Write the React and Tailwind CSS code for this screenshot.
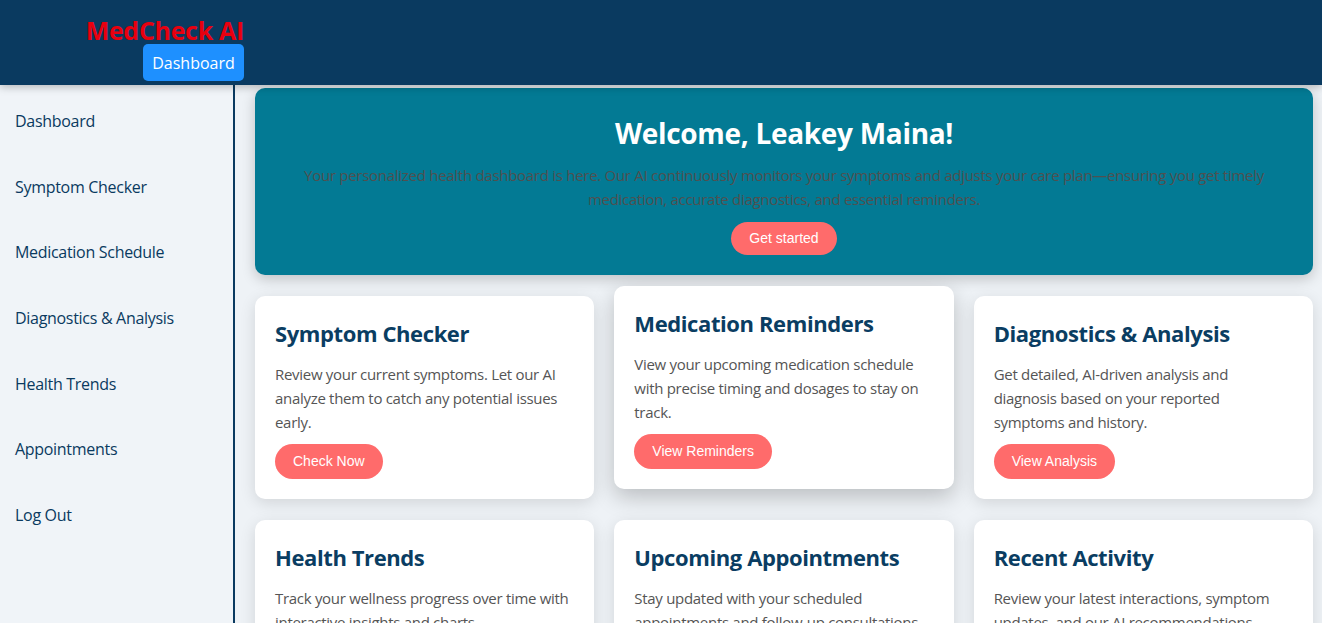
import React from 'react';

const navItems = [
  'Dashboard',
  'Symptom Checker',
  'Medication Schedule',
  'Diagnostics & Analysis',
  'Health Trends',
  'Appointments',
  'Log Out',
];

const cards = [
  {
    title: 'Symptom Checker',
    text: 'Review your current symptoms. Let our AI analyze them to catch any potential issues early.',
    action: 'Check Now',
  },
  {
    title: 'Medication Reminders',
    text: 'View your upcoming medication schedule with precise timing and dosages to stay on track.',
    action: 'View Reminders',
    raised: true,
  },
  {
    title: 'Diagnostics & Analysis',
    text: 'Get detailed, AI-driven analysis and diagnosis based on your reported symptoms and history.',
    action: 'View Analysis',
  },
  {
    title: 'Health Trends',
    text: 'Track your wellness progress over time with interactive insights and charts.',
    action: 'View Trends',
  },
  {
    title: 'Upcoming Appointments',
    text: 'Stay updated with your scheduled appointments and follow-up consultations.',
    action: 'View Appointments',
  },
  {
    title: 'Recent Activity',
    text: 'Review your latest interactions, symptom updates, and our AI recommendations.',
    action: 'View Activity',
  },
];

const body = { fontFamily: '"Open Sans", "Noto Sans", sans-serif' };
const arial = { fontFamily: '"Liberation Sans", Arial, sans-serif' };

function Card({ title, text, action, raised }) {
  return (
    <div
      className={`bg-white rounded-[10px] px-[20px] pt-[23px] pb-[20px] ${
        raised
          ? '-translate-y-[10px] shadow-[0_8px_22px_rgba(0,0,0,0.22)]'
          : 'shadow-[0_4px_16px_rgba(0,0,0,0.12)]'
      }`}
    >
      <h3 className="text-[22px] leading-[28px] font-bold text-[#0a3d62] tracking-[-0.4px]">{title}</h3>
      <p className="mt-[15px] text-[15px] leading-[24px] text-[#555] tracking-[-0.3px]">{text}</p>
      <button
        style={arial}
        className="mt-[10px] h-[35px] px-[18px] rounded-full bg-[#ff6b6b] text-white text-[14px]"
      >
        {action}
      </button>
    </div>
  );
}

export default function App() {
  return (
    <div style={body} className="min-h-screen flex flex-col bg-[#eef2f6]">
      {/* Header */}
      <header className="relative z-10 h-[85px] bg-[#0a3a60] shadow-[0_2px_8px_rgba(0,0,0,0.25)] shrink-0">
        <div className="w-[244px] flex flex-col items-end pt-[14px]">
          <h1 className="text-[25px] leading-[32px] font-bold text-[#e8000f] tracking-[-0.3px]">MedCheck AI</h1>
          <button className="-mt-[2px] h-[37px] w-[101px] rounded-[5px] bg-[#1e90ff] text-white text-[16px]">
            Dashboard
          </button>
        </div>
      </header>

      <div className="flex flex-1">
        {/* Sidebar */}
        <aside className="w-[235px] shrink-0 bg-[#f0f4f8] border-r-2 border-[#0a3a60] pt-[3px]">
          <ul className="flex flex-col">
            {navItems.map((item) => (
              <li
                key={item}
                className="h-[65.7px] flex items-center pl-[15px] text-[16px] text-[#0a3a60] tracking-[-0.3px]"
              >
                {item}
              </li>
            ))}
          </ul>
        </aside>

        {/* Main */}
        <main className="flex-1 pl-[20px] pr-[9px] pt-[3px] pb-[20px]">
          <section className="bg-[#037a94] rounded-[10px] shadow-[0_4px_14px_rgba(0,0,0,0.2)] px-[30px] pt-[27px] pb-[20px] text-center">
            <h2 className="text-[28px] leading-[36px] font-bold text-white tracking-[-0.3px]">
              Welcome, Leakey Maina!
            </h2>
            <p className="mt-[12px] text-[15px] leading-[24px] text-[#505050] tracking-[-0.28px]">
              Your personalized health dashboard is here. Our AI continuously monitors your symptoms and adjusts your care plan—ensuring you get timely
              <br />
              medication, accurate diagnostics, and essential reminders.
            </p>
            <button
              style={arial}
              className="mt-[11px] h-[33px] px-[18px] rounded-full bg-[#ff6b6b] text-white text-[14px]"
            >
              Get started
            </button>
          </section>

          <div className="mt-[21px] grid grid-cols-3 gap-x-[20px] gap-y-[21px]">
            {cards.map((c) => (
              <Card key={c.title} {...c} />
            ))}
          </div>
        </main>
      </div>
    </div>
  );
}
